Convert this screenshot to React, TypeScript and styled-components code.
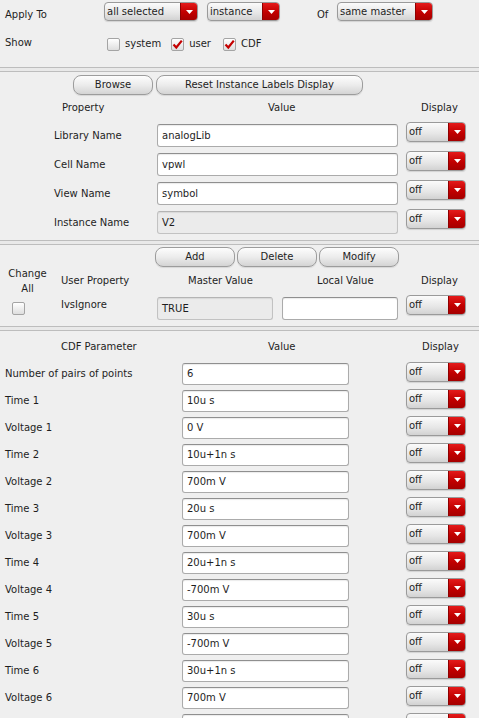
import React from 'react'
import styled, { createGlobalStyle } from 'styled-components'

const GlobalStyle = createGlobalStyle`
  html, body {
    margin: 0;
    padding: 0;
    overflow: hidden;
    background: #efefef;
  }
  body {
    font-family: "DejaVu Sans", sans-serif;
    font-size: 10px;
    color: #1e1e1e;
  }
`

const Page = styled.div`
  width: 479px;
  height: 718px;
  overflow: hidden;
  background: #efefef;
`

const Section = styled.div<{ $pb: number }>`
  padding-bottom: ${p => p.$pb}px;
`

const Separator = styled.div`
  height: 3px;
  border-top: 1px solid #bdbdbd;
  border-bottom: 1px solid #bdbdbd;
  background: #e9e9e9;
`

const Row = styled.div<{ $h: number; $pl?: number; $pt?: number }>`
  display: flex;
  align-items: flex-start;
  height: ${p => p.$h}px;
  padding-left: ${p => p.$pl || 0}px;
  padding-top: ${p => p.$pt || 0}px;
`

const Label = styled.div<{ $w: number; $mt: number; $ml?: number }>`
  flex: none;
  width: ${p => p.$w}px;
  margin-top: ${p => p.$mt}px;
  margin-left: ${p => p.$ml || 0}px;
  line-height: 12px;
  white-space: nowrap;
`

const HeaderCell = styled.div<{ $w: number; $pl: number; $center?: boolean }>`
  flex: none;
  box-sizing: border-box;
  width: ${p => p.$w}px;
  padding-left: ${p => p.$pl}px;
  text-align: ${p => (p.$center ? 'center' : 'left')};
  line-height: 15px;
  white-space: nowrap;
  align-self: center;
`

const HeaderRow = styled.div<{ $h: number }>`
  display: flex;
  align-items: center;
  height: ${p => p.$h}px;
`

const SelectBox = styled.div<{ $w: number; $mt: number; $ml?: number }>`
  flex: none;
  display: flex;
  box-sizing: border-box;
  width: ${p => p.$w}px;
  height: ${p => (p.$w > 70 ? 19 : 20)}px;
  margin-top: ${p => p.$mt}px;
  margin-left: ${p => p.$ml || 0}px;
  border: 1px solid #9a9a9a;
  border-radius: 4px;
  overflow: hidden;
  background: linear-gradient(#fbfbfb, #e6e6e6 60%, #d2d2d2);
  box-shadow: 0 1px 1px rgba(0, 0, 0, 0.12);
`

const SelectText = styled.div`
  flex: 1;
  padding-left: 2px;
  line-height: 17px;
  white-space: nowrap;
  overflow: hidden;
`

const SelectArrow = styled.div`
  flex: none;
  width: 16px;
  display: flex;
  align-items: center;
  justify-content: center;
  background: linear-gradient(#e41b1b, #c10000 55%, #a50000);
  border-left: 1px solid #8e0000;
`

const Select: React.FC<{ value: string; w: number; mt: number; ml?: number }> = ({ value, w, mt, ml }) => (
  <SelectBox $w={w} $mt={mt} $ml={ml}>
    <SelectText>{value}</SelectText>
    <SelectArrow>
      <svg width="7" height="4" viewBox="0 0 7 4">
        <path d="M0 0 L7 0 L3.5 4 Z" fill="#fff" />
      </svg>
    </SelectArrow>
  </SelectBox>
)

const Field = styled.div<{ $w: number; $h: number; $mt: number; $ml?: number; $disabled?: boolean }>`
  flex: none;
  box-sizing: border-box;
  width: ${p => p.$w}px;
  height: ${p => p.$h}px;
  margin-top: ${p => p.$mt}px;
  margin-left: ${p => p.$ml || 0}px;
  padding-left: 4px;
  line-height: ${p => p.$h - 2}px;
  border: 1px solid ${p => (p.$disabled ? '#c2c2c2' : '#ababab')};
  border-top-color: ${p => (p.$disabled ? '#b4b4b4' : '#8f8f8f')};
  border-radius: 3px;
  background: ${p => (p.$disabled ? '#ebebeb' : '#ffffff')};
  box-shadow: inset 0 1px 1px rgba(0, 0, 0, 0.08);
  white-space: nowrap;
`

const ButtonBar = styled.div<{ $pl: number; $pt: number; $gap: number }>`
  display: flex;
  padding-left: ${p => p.$pl}px;
  padding-top: ${p => p.$pt}px;
  gap: ${p => p.$gap}px;
`

const Button = styled.div<{ $w: number }>`
  box-sizing: border-box;
  width: ${p => p.$w}px;
  height: 20px;
  line-height: 18px;
  text-align: center;
  border: 1px solid #9c9c9c;
  border-radius: 8px;
  background: linear-gradient(#fdfdfd, #ececec 50%, #d4d4d4);
  box-shadow: 0 1px 1px rgba(0, 0, 0, 0.1);
  white-space: nowrap;
`

const CheckBox = styled.div<{ $mt?: number; $ml?: number }>`
  flex: none;
  box-sizing: border-box;
  width: 13px;
  height: 13px;
  margin-top: ${p => p.$mt || 0}px;
  margin-left: ${p => p.$ml || 0}px;
  border: 1px solid #a4a4a4;
  border-radius: 2px;
  background: linear-gradient(#ffffff, #dedede);
  display: flex;
  align-items: center;
  justify-content: center;
`

const Check: React.FC<{ checked?: boolean; mt?: number; ml?: number }> = ({ checked, mt, ml }) => (
  <CheckBox $mt={mt} $ml={ml}>
    {checked && (
      <svg width="11" height="11" viewBox="0 0 11 11">
        <path d="M1.5 5.5 L4.3 8.5 L9.8 1.6" stroke="#c40000" strokeWidth="2.2" fill="none" />
      </svg>
    )}
  </CheckBox>
)

const CheckItem = styled.label<{ $mr: number }>`
  display: flex;
  align-items: center;
  gap: 5px;
  margin-right: ${p => p.$mr}px;
  line-height: 14px;
`

const TwoLine = styled.div`
  text-align: center;
  line-height: 15px;
`

const instanceRows = [
  { label: 'Library Name', value: 'analogLib' },
  { label: 'Cell Name', value: 'vpwl' },
  { label: 'View Name', value: 'symbol' },
  { label: 'Instance Name', value: 'V2', disabled: true },
]

// last row is only partly in view: its texts sit below the window edge
const cdfRows = [
  { label: 'Number of pairs of points', value: '6', display: 'off' },
  { label: 'Time 1', value: '10u s', display: 'off' },
  { label: 'Voltage 1', value: '0 V', display: 'off' },
  { label: 'Time 2', value: '10u+1n s', display: 'off' },
  { label: 'Voltage 2', value: '700m V', display: 'off' },
  { label: 'Time 3', value: '20u s', display: 'off' },
  { label: 'Voltage 3', value: '700m V', display: 'off' },
  { label: 'Time 4', value: '20u+1n s', display: 'off' },
  { label: 'Voltage 4', value: '-700m V', display: 'off' },
  { label: 'Time 5', value: '30u s', display: 'off' },
  { label: 'Voltage 5', value: '-700m V', display: 'off' },
  { label: 'Time 6', value: '30u+1n s', display: 'off' },
  { label: 'Voltage 6', value: '700m V', display: 'off' },
  { label: '', value: '', display: '' },
]

export default function App() {
  return (
    <Page>
      <GlobalStyle />

      <Section $pb={16}>
        <Row $h={30} $pl={5}>
          <Label $w={99} $mt={9}>Apply To</Label>
          <Select value="all selected" w={94} mt={2} />
          <Select value="instance" w={73} mt={2} ml={9} />
          <Label $w={20} $mt={9} $ml={37}>Of</Label>
          <Select value="same master" w={96} mt={2} />
        </Row>
        <Row $h={14} $pl={5} $pt={7}>
          <Label $w={102} $mt={0}>Show</Label>
          <CheckItem $mr={10}>
            <Check />
            system
          </CheckItem>
          <CheckItem $mr={12}>
            <Check checked />
            user
          </CheckItem>
          <CheckItem $mr={0}>
            <Check checked />
            CDF
          </CheckItem>
        </Row>
      </Section>
      <Separator />

      <Section $pb={5}>
        <ButtonBar $pl={73} $pt={3} $gap={3}>
          <Button $w={80}>Browse</Button>
          <Button $w={207}>Reset Instance Labels Display</Button>
        </ButtonBar>
        <HeaderRow $h={24}>
          <HeaderCell $w={157} $pl={62}>Property</HeaderCell>
          <HeaderCell $w={249} $pl={111}>Value</HeaderCell>
          <HeaderCell $w={73} $pl={15}>Display</HeaderCell>
        </HeaderRow>
        {instanceRows.map(r => (
          <Row key={r.label} $h={29} $pl={54}>
            <Label $w={103} $mt={11}>{r.label}</Label>
            <Field $w={241} $h={23} $mt={5} $disabled={r.disabled}>{r.value}</Field>
            <Select value="off" w={60} mt={3} ml={8} />
          </Row>
        ))}
      </Section>
      <Separator />

      <Section $pb={4}>
        <ButtonBar $pl={155} $pt={2} $gap={2}>
          <Button $w={80}>Add</Button>
          <Button $w={80}>Delete</Button>
          <Button $w={80}>Modify</Button>
        </ButtonBar>
        <HeaderRow $h={27}>
          <HeaderCell $w={55} $pl={0} $center>
            <TwoLine>Change<br />All</TwoLine>
          </HeaderCell>
          <HeaderCell $w={102} $pl={6}>User Property</HeaderCell>
          <HeaderCell $w={125} $pl={31}>Master Value</HeaderCell>
          <HeaderCell $w={124} $pl={35}>Local Value</HeaderCell>
          <HeaderCell $w={73} $pl={15}>Display</HeaderCell>
        </HeaderRow>
        <Row $h={28}>
          <Check mt={8} ml={12} />
          <Label $w={96} $mt={5} $ml={36}>IvsIgnore</Label>
          <Field $w={116} $h={23} $mt={3} $disabled>TRUE</Field>
          <Field $w={116} $h={23} $mt={3} $ml={9} />
          <Select value="off" w={60} mt={1} ml={8} />
        </Row>
      </Section>
      <Separator />

      <Section $pb={0}>
        <HeaderRow $h={30}>
          <HeaderCell $w={182} $pl={61}>CDF Parameter</HeaderCell>
          <HeaderCell $w={224} $pl={86}>Value</HeaderCell>
          <HeaderCell $w={73} $pl={16}>Display</HeaderCell>
        </HeaderRow>
        {cdfRows.map((r, i) => (
          <Row key={i} $h={27} $pl={5}>
            <Label $w={177} $mt={7}>{r.label}</Label>
            <Field $w={167} $h={22} $mt={2}>{r.value}</Field>
            <Select value={r.display} w={60} mt={1} ml={57} />
          </Row>
        ))}
      </Section>
    </Page>
  )
}
